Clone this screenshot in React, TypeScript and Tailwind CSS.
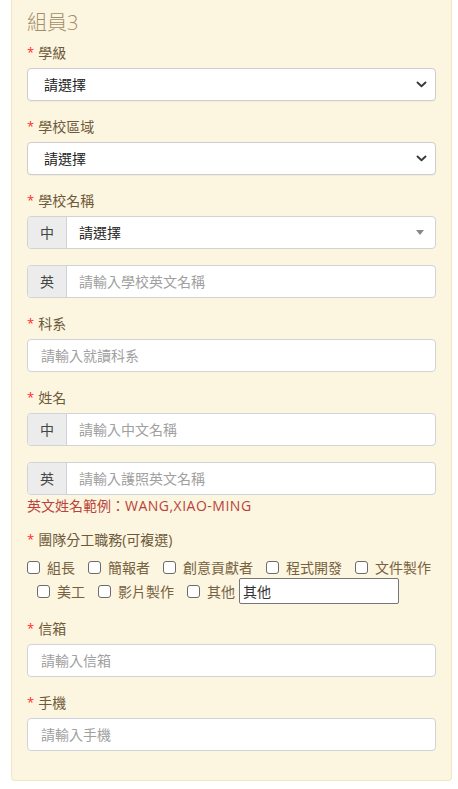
import React from 'react';

const FONT = { fontFamily: '"Open Sans", "Noto Sans CJK TC", sans-serif' };

function Label({ text }: { text: string }) {
  return (
    <div className="mb-[5px] flex h-[21px] items-center text-[14px] leading-[21px] text-[#6e5a3b]">
      <span className="mr-[4px] text-[13px] text-[#ff2a2a]">*</span>
      {text}
    </div>
  );
}

function NativeSelect() {
  return (
    <div className="flex h-[33px] items-center justify-between rounded border border-[#cdcdcd] bg-white pl-[16px] pr-[6px] shadow-[0_1px_1px_rgba(0,0,0,0.04)]">
      <span className="text-[14px] text-[#222]">請選擇</span>
      <svg width="11" height="7" viewBox="0 0 11 7" className="mr-[2px]">
        <polyline points="1.5,1.5 5.5,5.2 9.5,1.5" fill="none" stroke="#3a3a3a" strokeWidth="1.9" strokeLinecap="round" strokeLinejoin="round" />
      </svg>
    </div>
  );
}

function TextInput({ placeholder }: { placeholder: string }) {
  return (
    <div className="flex h-[33px] items-center rounded border border-[#ced4da] bg-white px-[13px] text-[14px] text-[#a0a0a0]">
      {placeholder}
    </div>
  );
}

function Prefixed({ prefix, children }: { prefix: string; children: React.ReactNode }) {
  return (
    <div className="flex h-[33px] rounded border border-[#ced4da] bg-white">
      <div className="flex w-[39px] items-center justify-center rounded-l border-r border-[#ced4da] bg-[#ececec] text-[14px] text-[#444]">
        {prefix}
      </div>
      <div className="flex flex-1 items-center px-[12px] text-[14px]">{children}</div>
    </div>
  );
}

function Check({ label, last }: { label: string; last?: boolean }) {
  return (
    <div className={`flex items-center ${last ? '' : 'mr-[13px]'}`}>
      <span className="h-[13px] w-[13px] rounded-[3px] border border-[#6b6b6b] bg-white" />
      <span className="ml-[7px] text-[14px] text-[#76623f]">{label}</span>
    </div>
  );
}

export default function App() {
  return (
    <div className="min-h-[789px] bg-white" style={FONT}>
      <div className="mx-[11px] w-[441px] rounded-b border border-t-0 border-[#f1e6c6] bg-[#fcf5e0] px-[15px] pb-[15px] pt-[9px]">
        <div className="mb-[5px] h-[28px] text-[20px] font-light leading-[28px] text-[#a48d6b]">組員3</div>

        <Label text="學級" />
        <div className="mb-[15px]">
          <NativeSelect />
        </div>

        <Label text="學校區域" />
        <div className="mb-[15px]">
          <NativeSelect />
        </div>

        <Label text="學校名稱" />
        <div className="mb-[16px]">
          <Prefixed prefix="中">
            <div className="flex w-full items-center justify-between">
              <span className="text-[#222]">請選擇</span>
              <span className="mr-[-1px] h-0 w-0 border-x-[4px] border-t-[5px] border-x-transparent border-t-[#888]" />
            </div>
          </Prefixed>
        </div>
        <div className="mb-[15px]">
          <Prefixed prefix="英">
            <span className="text-[#a0a0a0]">請輸入學校英文名稱</span>
          </Prefixed>
        </div>

        <Label text="科系" />
        <div className="mb-[15px]">
          <TextInput placeholder="請輸入就讀科系" />
        </div>

        <Label text="姓名" />
        <div className="mb-[16px]">
          <Prefixed prefix="中">
            <span className="text-[#a0a0a0]">請輸入中文名稱</span>
          </Prefixed>
        </div>
        <Prefixed prefix="英">
          <span className="text-[#a0a0a0]">請輸入護照英文名稱</span>
        </Prefixed>
        <div className="mb-[13px] h-[21px] text-[14px] leading-[21px] text-[#b8433a]">
          英文姓名範例：<span className="tracking-[0.5px]">WANG,XIAO-MING</span>
        </div>

        <Label text="團隊分工職務(可複選)" />
        <div className="flex h-[24px] items-center">
          <Check label="組長" />
          <Check label="簡報者" />
          <Check label="創意貢獻者" />
          <Check label="程式開發" />
          <Check label="文件製作" last />
        </div>
        <div className="mb-[15px] ml-[10px] flex h-[24px] items-center">
          <Check label="美工" />
          <Check label="影片製作" />
          <Check label="其他" last />
          <div className="ml-[4px] flex h-[26px] w-[160px] items-center rounded-[2px] border border-[#767676] bg-white px-[3px] text-[14px] text-[#333]">
            其他
          </div>
        </div>

        <Label text="信箱" />
        <div className="mb-[15px]">
          <TextInput placeholder="請輸入信箱" />
        </div>

        <Label text="手機" />
        <div className="mb-[14px]">
          <TextInput placeholder="請輸入手機" />
        </div>
      </div>
    </div>
  );
}
